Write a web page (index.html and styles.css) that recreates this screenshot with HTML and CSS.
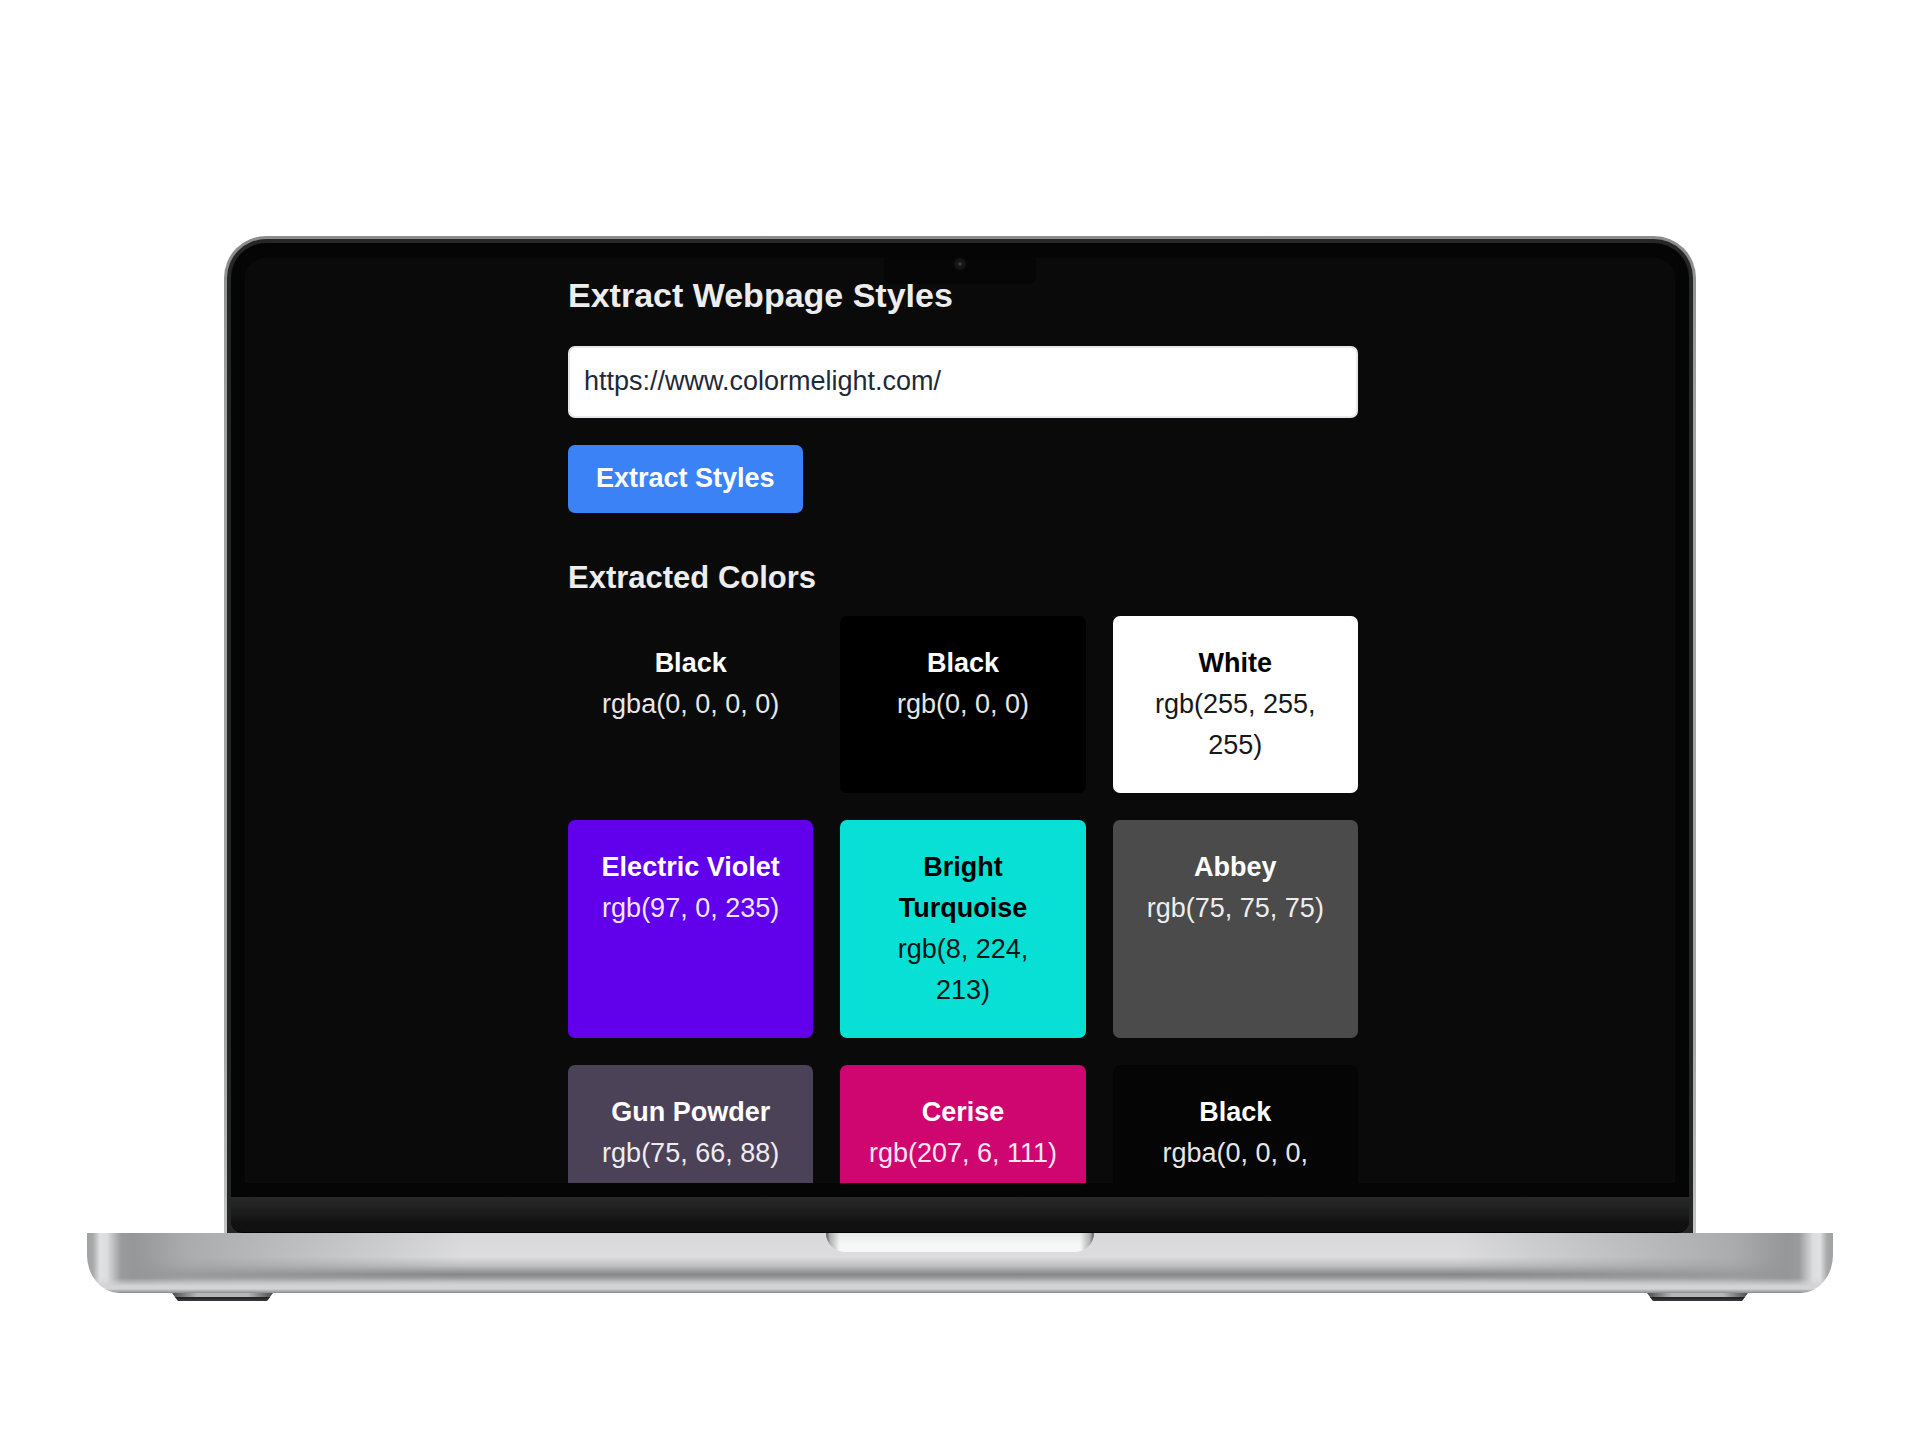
FILE: index.html
```html
<!DOCTYPE html>
<html lang="en">
<head>
<meta charset="utf-8">
<meta name="viewport" content="width=device-width, initial-scale=1">
<title>Extract Webpage Styles</title>
<link rel="stylesheet" href="styles.css">
</head>
<body>
<div class="laptop">
  <div class="lid">
    <div class="rim">
      <div class="bezel">
        <div class="screen">
          <div class="notch"><span class="camera"></span></div>
          <main class="app">
            <h1 class="title">Extract Webpage Styles</h1>
            <form class="form">
              <input class="url" type="text" aria-label="Webpage URL" value="https://www.colormelight.com/">
              <button class="submit" type="button">Extract Styles</button>
            </form>
            <h2 class="subtitle">Extracted Colors</h2>
            <ul class="swatches">
              <li class="swatch clear"><strong>Black</strong><span class="code">rgba(0, 0, 0, 0)</span></li>
              <li class="swatch black"><strong>Black</strong><span class="code">rgb(0, 0, 0)</span></li>
              <li class="swatch white"><strong>White</strong><span class="code">rgb(255, 255, 255)</span></li>
              <li class="swatch violet"><strong>Electric Violet</strong><span class="code">rgb(97, 0, 235)</span></li>
              <li class="swatch turquoise"><strong>Bright Turquoise</strong><span class="code">rgb(8, 224,<br>213)</span></li>
              <li class="swatch abbey"><strong>Abbey</strong><span class="code">rgb(75, 75, 75)</span></li>
              <li class="swatch powder"><strong>Gun Powder</strong><span class="code">rgb(75, 66, 88)</span></li>
              <li class="swatch cerise"><strong>Cerise</strong><span class="code">rgb(207, 6, 111)</span></li>
              <li class="swatch shade"><strong>Black</strong><span class="code">rgba(0, 0, 0, 0.5)</span></li>
            </ul>
          </main>
        </div>
      </div>
      <div class="chin"></div>
    </div>
  </div>
  <div class="base"><div class="lip"></div></div>
  <div class="feet"><span class="foot"></span><span class="foot"></span></div>
</div>
</body>
</html>
```
FILE: styles.css
```css
* {
  box-sizing: border-box;
}

body {
  margin: 0;
  padding: 236px 87px 139px;
  background: #fff;
  font-family: "Liberation Sans", Arial, sans-serif;
}

.laptop {
  max-width: 1746px;
  margin: 0 auto;
}

.lid {
  margin: 0 137px;
  padding: 3px 3px 0;
  border-radius: 42px 42px 0 0;
  background: linear-gradient(#8c8c8c, #a2a2a3 20%, #a2a2a3 80%, #c4c4c4);
}

.rim {
  padding: 4px 4px 0;
  border-radius: 39px 39px 0 0;
  background: #252626;
}

.bezel {
  padding: 15px 14px 14px;
  border-radius: 35px 35px 0 0;
  background: #050505;
}

.screen {
  position: relative;
  aspect-ratio: 1430 / 925;
  overflow: hidden;
  padding: 13px 20px 0 26px;
  border-radius: 19px 19px 0 0;
  background: #0a0a0a;
}

.notch {
  position: absolute;
  top: 0;
  left: 50%;
  width: 152px;
  height: 26px;
  margin-left: -76px;
  border-radius: 0 0 8px 8px;
  background: #060606;
  display: flex;
  justify-content: center;
}

.camera {
  width: 12px;
  height: 12px;
  border-radius: 50%;
  background: radial-gradient(#444 0 1px, #151515 2px);
}

.chin {
  height: 36px;
  border-radius: 0 0 12px 12px;
  border-bottom: 1px solid #030303;
  background: linear-gradient(#282828, #1b1b1b 50%, #111 75%);
}

.app {
  max-width: 790px;
  margin: 0 auto;
  color: #ededed;
  font-size: 27px;
  line-height: 41px;
}

.title {
  margin: 0 0 27px;
  font-size: 34px;
  line-height: 48px;
}

.form {
  display: flex;
  flex-direction: column;
  align-items: flex-start;
  gap: 27px;
}

.url {
  width: 100%;
  height: 72px;
  padding: 0 14px 2px;
  border: 2px solid #e5e7eb;
  border-radius: 7px;
  background: #fff;
  color: #1f2937;
  font: inherit;
}

.submit {
  height: 68px;
  padding: 0 28px 2px;
  border: 0;
  border-radius: 7px;
  background: #3b82f6;
  color: #fff;
  font: inherit;
  font-weight: 700;
}

.subtitle {
  margin: 41px 0 14px;
  font-size: 31px;
  line-height: 48px;
}

.swatches {
  display: grid;
  grid-template-columns: repeat(3, 1fr);
  gap: 27px;
  margin: 0;
  padding: 0;
  list-style: none;
}

.swatch {
  display: flex;
  flex-direction: column;
  padding: 27px;
  border-radius: 7px;
  color: #fff;
  text-align: center;
}

.code {
  opacity: 0.9;
}

.clear {
  background: rgba(0, 0, 0, 0);
}

.black {
  background: rgb(0, 0, 0);
}

.white {
  background: rgb(255, 255, 255);
  color: #000;
}

.violet {
  background: rgb(97, 0, 235);
}

.turquoise {
  background: rgb(8, 224, 213);
  color: #000;
}

.abbey {
  background: rgb(75, 75, 75);
}

.powder {
  background: rgb(75, 66, 88);
}

.cerise {
  background: rgb(207, 6, 111);
}

.shade {
  background: rgba(0, 0, 0, 0.5);
}

.base {
  height: 60px;
  border-radius: 0 0 32px 32px / 0 0 38px 38px;
  background:
    linear-gradient(rgba(216, 217, 219, 0) 75%, #d2d3d5 88%, #d4d5d7 93%, #8a8b8d),
    linear-gradient(90deg, #a0a1a3, #a8a9ab 6px, #e0e1e3 13px, #dcdddf 20px, #9a9b9d 34px, #959698 46px, rgba(158, 160, 162, 0.8) 100px, rgba(190, 191, 193, 0) 380px, rgba(190, 191, 193, 0) calc(100% - 380px), rgba(158, 160, 162, 0.8) calc(100% - 100px), #959698 calc(100% - 46px), #9a9b9d calc(100% - 34px), #dcdddf calc(100% - 20px), #e0e1e3 calc(100% - 13px), #a8a9ab calc(100% - 6px), #a0a1a3),
    linear-gradient(#d8d8da, #dddddf 40%, #c0c1c3 54%, #868789 69%, #a8a9ab 80%, #d4d5d7 90%);
}

.lip {
  width: 268px;
  height: 19px;
  margin: 0 auto;
  border-radius: 0 0 20px 20px;
  background:
    linear-gradient(90deg, #555, #b0b0b0 4px, rgba(245, 246, 246, 0) 14px, rgba(245, 246, 246, 0) calc(100% - 14px), #b0b0b0 calc(100% - 4px), #555),
    linear-gradient(#e9e9e9, #f6f8f7 60%);
}

.feet {
  display: flex;
  justify-content: space-between;
  padding: 0 85px;
}

.foot {
  width: 101px;
  height: 8px;
  clip-path: polygon(0 0, 100% 0, 94% 100%, 6% 100%);
  background:
    linear-gradient(transparent 45%, #1c1e1f 50%, #3a3c3d),
    linear-gradient(90deg, #4a4c4d, #b4b8b9 25%, #b4b8b9 75%, #4a4c4d);
}
```
